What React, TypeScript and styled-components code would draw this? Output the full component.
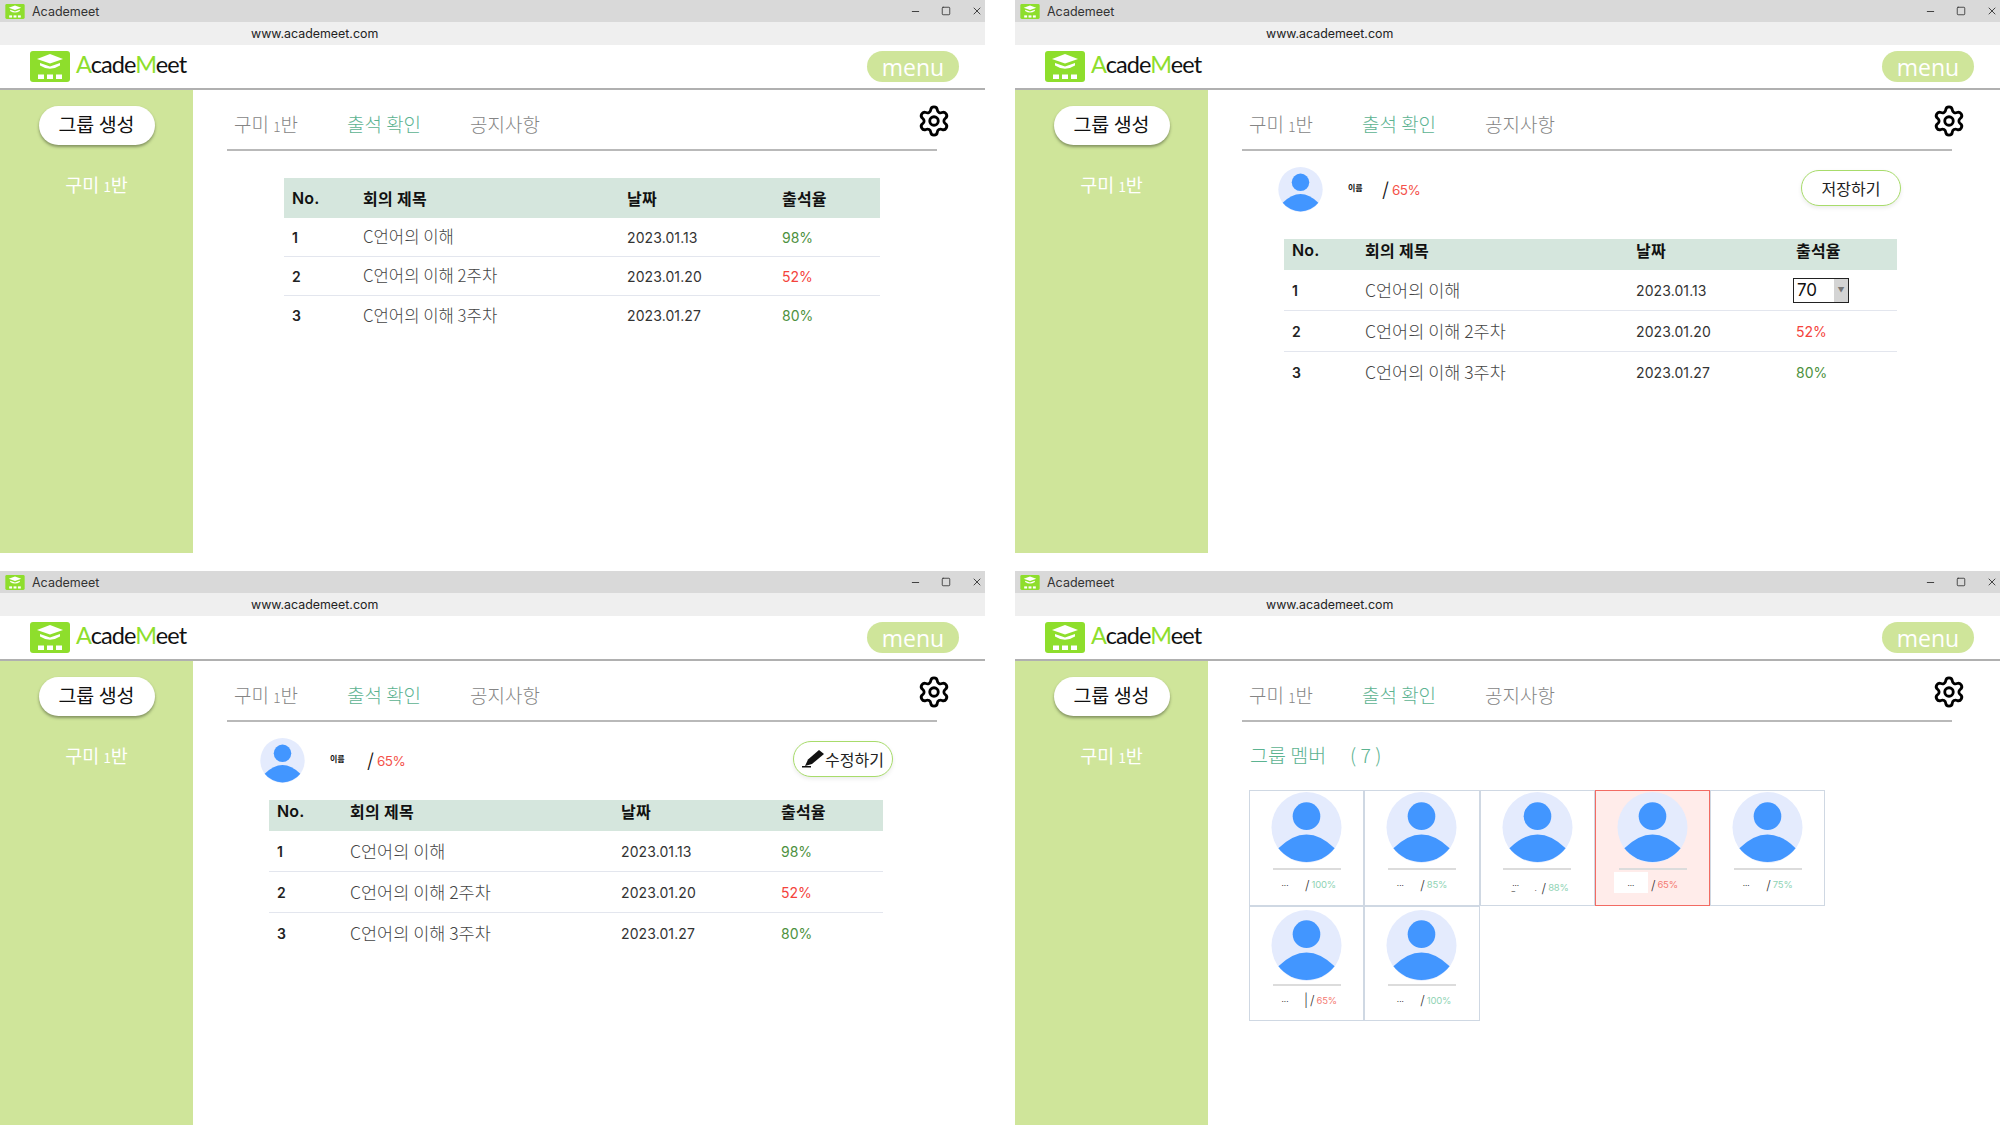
import React from 'react';
import styled, { createGlobalStyle } from 'styled-components';
import { Minus, Settings, Square, X } from 'lucide-react';

const GlobalStyle = createGlobalStyle`
  html, body {
    margin: 0;
    padding: 0;
    background: #fff;
  }
  * {
    box-sizing: border-box;
  }
  body {
    font-family: 'Inter', 'Noto Sans CJK KR', sans-serif;
  }
`;

const KOREAN = `'Noto Sans CJK KR', 'Inter', sans-serif`;
const MINT = '#5cb391';

const Page = styled.div`
  width: 2000px;
  height: 1125px;
  display: grid;
  grid-template-columns: 985px 985px;
  grid-template-rows: 553px 554px;
  column-gap: 30px;
  row-gap: 18px;
  overflow: hidden;
`;

const WindowFrame = styled.section`
  display: flex;
  flex-direction: column;
  min-width: 0;
  min-height: 0;
  background: #fff;
`;

const TitleBar = styled.div`
  height: 22px;
  flex: none;
  display: flex;
  align-items: center;
  padding: 0 2px 0 5px;
  background: #d9d9d9;
`;

const TitleText = styled.span`
  margin-left: 7px;
  font-size: 12.5px;
  color: #333;
`;

const WindowControls = styled.div`
  margin-left: auto;
  display: flex;
  align-items: center;
  gap: 20px;
  color: #333;
`;

const AddressBar = styled.div`
  height: 23px;
  flex: none;
  padding-left: 251px;
  display: flex;
  align-items: center;
  background: #efefef;
  font-size: 12.4px;
  color: #222;
`;

const Header = styled.header`
  height: 45px;
  flex: none;
  display: flex;
  align-items: center;
  padding: 0 26px 0 30px;
  border-bottom: 2px solid #b0b0b0;
`;

const Brand = styled.div`
  margin: -5px 0 0 6px;
  font-family: 'Lato', sans-serif;
  font-size: 23.5px;
  letter-spacing: -0.9px;
  color: #111;
`;

const BrandAccent = styled.span`
  color: #8ede2c;
`;

const MenuButton = styled.button`
  margin-left: auto;
  width: 92px;
  height: 31px;
  padding: 0;
  border: none;
  border-radius: 16px;
  background: #cfe59a;
  color: #fff;
  font-family: 'Open Sans', sans-serif;
  font-size: 23px;
  line-height: 28px;
`;

const Body = styled.div`
  flex: 1;
  display: flex;
  min-height: 0;
`;

const Sidebar = styled.aside`
  width: 193px;
  flex: none;
  display: flex;
  flex-direction: column;
  align-items: center;
  padding-top: 16px;
  background: #cfe59a;
`;

const CreateButton = styled.button`
  width: 116px;
  height: 39px;
  padding: 0 0 5px;
  border: none;
  border-radius: 20px;
  background: #fff;
  box-shadow: 0 2px 3px rgba(70, 80, 50, 0.55);
  color: #111;
  font-family: ${KOREAN};
  font-size: 19.5px;
`;

const SidebarItem = styled.div`
  margin-top: 26px;
  color: #fff;
  font-family: ${KOREAN};
  font-size: 18.5px;
`;

const SmallDigit = styled.span`
  font-size: 0.72em;
`;

const Main = styled.main`
  flex: 1;
  min-width: 0;
  padding: 0 48px 0 34px;
`;

const TabBar = styled.nav`
  height: 61px;
  display: flex;
  align-items: center;
  padding: 8px 0 0 7px;
  border-bottom: 2px solid #b9b9b9;
  font-family: ${KOREAN};
  font-size: 19px;
  font-weight: 300;
`;

const Tab = styled.span<{ $active?: boolean }>`
  margin-right: 49px;
  color: ${({ $active }) => ($active ? MINT : '#858585')};
`;

const GearSlot = styled.div`
  margin-left: auto;
  margin-right: -14px;
  margin-top: -6px;
  height: 34px;
  color: #000;
`;

const ProfileRow = styled.div<{ $left: number; $right: number }>`
  display: flex;
  align-items: center;
  height: 45px;
  margin: 16px ${({ $right }) => $right}px 0 ${({ $left }) => $left}px;
`;

const ProfileName = styled.span`
  margin-left: 25px;
  width: 16px;
  margin-top: -4px;
  font-family: ${KOREAN};
  font-size: 8px;
  font-weight: 700;
  color: #111;
`;

const ProfileSlash = styled.span<{ $gap: number }>`
  margin-left: ${({ $gap }) => $gap}px;
  font-size: 20px;
  font-weight: 300;
  color: #111;
`;

const ProfileRate = styled.span`
  margin-left: 3px;
  font-size: 13.5px;
  letter-spacing: -0.5px;
  color: #f4524a;
`;

const OutlineButton = styled.button`
  margin: -3px 0 0 auto;
  width: 100px;
  height: 36px;
  display: flex;
  align-items: center;
  justify-content: center;
  padding: 0;
  border: 1.5px solid #a8dc6b;
  border-radius: 18px;
  background: #fff;
  box-shadow: 0 2px 4px rgba(0, 0, 0, 0.08);
  color: #222;
  font-family: ${KOREAN};
  font-size: 16px;
`;

const Table = styled.div<{ $left: number; $width: number; $top: number }>`
  width: ${({ $width }) => $width}px;
  margin: ${({ $top }) => $top}px 0 0 ${({ $left }) => $left}px;
`;

const TableRow = styled.div<{ $head?: boolean; $columns: string; $height: number }>`
  display: grid;
  grid-template-columns: ${({ $columns }) => $columns};
  align-items: center;
  height: ${({ $height }) => $height}px;
  padding-left: 8px;
  font-size: 14px;
  background: ${({ $head }) => ($head ? '#d5e6dd' : 'transparent')};
  border-bottom: 1px solid ${({ $head }) => ($head ? '#d5e6dd' : '#e3e6ee')};

  &:last-child {
    border-bottom: none;
  }
`;

const HeadCell = styled.div<{ $raised?: boolean }>`
  font-size: 16px;
  font-weight: 600;
  letter-spacing: 0.2px;
  color: #111;
  margin-top: ${({ $raised }) => ($raised ? -9 : 0)}px;
`;

const NumberCell = styled.div`
  font-weight: 600;
  color: #222;
`;

const TitleCell = styled.div<{ $size: number }>`
  margin-top: -2px;
  font-family: ${KOREAN};
  font-size: ${({ $size }) => $size}px;
  font-weight: 300;
  color: #444;
`;

const DateCell = styled.div`
  letter-spacing: 0.1px;
  color: #333;
`;

const RateCell = styled.div<{ $tone: 'good' | 'bad' }>`
  color: ${({ $tone }) => ($tone === 'good' ? '#4d9140' : '#f4433c')};
`;

const RateSelect = styled.div`
  width: 56px;
  height: 25px;
  margin-left: -3px;
  display: flex;
  align-items: stretch;
  justify-content: space-between;
  border: 1px solid #222;
  font-size: 17px;
  color: #111;
`;

const RateValue = styled.span`
  padding-left: 3px;
  line-height: 22px;
`;

const RateArrow = styled.span`
  width: 14px;
  display: flex;
  align-items: center;
  justify-content: center;
  background: #d4d4d4;
  color: #777;
  font-size: 7px;
`;

const GroupHeading = styled.h2`
  margin: 18px 0 0 8px;
  display: flex;
  gap: 24px;
  font-family: ${KOREAN};
  font-size: 19.5px;
  line-height: 30px;
  font-weight: 300;
  color: ${MINT};
`;

const MemberGrid = styled.div`
  margin: 20px 0 0 7px;
  display: grid;
  grid-template-columns: repeat(5, 115.3px);
  grid-auto-rows: 115.5px;
`;

const MemberCard = styled.div<{ $alert?: boolean; $lowered?: boolean }>`
  position: relative;
  display: flex;
  flex-direction: column;
  align-items: center;
  padding-top: ${({ $lowered }) => ($lowered ? 3 : 1)}px;
  border: 1px solid ${({ $alert }) => ($alert ? '#f26b63' : '#cfd8e3')};
  background: ${({ $alert }) => ($alert ? '#ffecea' : '#fff')};
`;

const MemberRule = styled.div<{ $lowered?: boolean }>`
  width: 68px;
  height: 2px;
  margin-top: ${({ $lowered }) => ($lowered ? 3 : 5)}px;
  background: #dcdcdc;
`;

const MemberFooter = styled.div`
  align-self: stretch;
  display: flex;
  align-items: center;
  height: 21px;
  margin-top: 2px;
  padding-left: 18px;
`;

const MemberName = styled.span<{ $masked?: boolean }>`
  width: 34px;
  height: 21px;
  flex: none;
  text-align: center;
  font-size: 8px;
  line-height: 22px;
  color: #222;
  background: ${({ $masked }) => ($masked ? '#fff' : 'transparent')};
`;

const MemberSlash = styled.span<{ $offset: number; $drop?: boolean }>`
  margin: ${({ $drop }) => ($drop ? 10 : 4)}px 0 0 ${({ $offset }) => $offset}px;
  font-size: 13px;
  font-weight: 300;
  color: #333;
`;

const MemberRate = styled.span<{ $tone: 'good' | 'bad'; $drop?: boolean }>`
  margin: ${({ $drop }) => ($drop ? 10 : 4)}px 0 0 2px;
  font-size: 9.5px;
  letter-spacing: -0.2px;
  color: ${({ $tone }) => ($tone === 'good' ? '#8fd3b4' : '#f47a72')};
`;

// stray marks left over the third card's name in the picture
const StrayMark = styled.span<{ $left: number }>`
  position: absolute;
  left: ${({ $left }) => $left}px;
  top: 92px;
  font-size: 8px;
  color: #555;
`;

const LogoMark = ({ width, height }: { width: number; height: number }) => (
  <svg width={width} height={height} viewBox="0 0 40 31" style={{ flex: 'none' }}>
    <rect width="40" height="31" rx="3" fill="#8ede2c" />
    <polygon points="20,3 33,8 20,12.5 7,8" fill="#fff" />
    <path d="M10 12 L20 15.5 L30 12 L30 14.5 Q20 21 10 14.5 Z" fill="#fff" />
    <rect x="8" y="23.5" width="6" height="4.5" fill="#fff" />
    <rect x="17" y="23.5" width="6" height="4.5" fill="#fff" />
    <rect x="26" y="23.5" width="6" height="4.5" fill="#fff" />
  </svg>
);

const Avatar = ({ size }: { size: number }) => (
  <svg width={size} height={size} viewBox="0 0 71 72" style={{ flex: 'none' }}>
    <ellipse cx="35.5" cy="36" rx="35.5" ry="36" fill="#e4ebfd" />
    <ellipse cx="35.5" cy="24.5" rx="14" ry="14" fill="#4296ff" />
    <path d="M7 57 Q35.5 29 64 57 A36 36 0 0 1 7 57 Z" fill="#4296ff" />
  </svg>
);

const PencilIcon = () => (
  <svg width="23" height="18" viewBox="0 0 23 18" style={{ flex: 'none' }}>
    <path d="M17 0 L22 4 L10 14 L3 16 L6 9.5 Z" fill="#111" />
    <rect x="0" y="16" width="9" height="1.5" fill="#111" />
  </svg>
);

type Rate = { value: string; tone: 'good' | 'bad' };

const MEETINGS: { no: number; title: string; date: string; rate: Rate }[] = [
  { no: 1, title: 'C언어의 이해', date: '2023.01.13', rate: { value: '98%', tone: 'good' } },
  { no: 2, title: 'C언어의 이해 2주차', date: '2023.01.20', rate: { value: '52%', tone: 'bad' } },
  { no: 3, title: 'C언어의 이해 3주차', date: '2023.01.27', rate: { value: '80%', tone: 'good' } },
];

const MEMBERS: {
  rate: Rate;
  offset: number;
  alert?: boolean;
  drop?: boolean;
  bar?: boolean;
}[] = [
  { rate: { value: '100%', tone: 'good' }, offset: 3 },
  { rate: { value: '85%', tone: 'good' }, offset: 3 },
  { rate: { value: '88%', tone: 'good' }, offset: 9, drop: true },
  { rate: { value: '65%', tone: 'bad' }, offset: 3, alert: true },
  { rate: { value: '75%', tone: 'good' }, offset: 3 },
  { rate: { value: '65%', tone: 'bad' }, offset: 2, bar: true },
  { rate: { value: '100%', tone: 'good' }, offset: 3 },
];

type TableProps = {
  left: number;
  width: number;
  top: number;
  columns: string;
  headHeight: number;
  rowHeight: number;
  titleSize: number;
  raised?: boolean;
  editFirst?: boolean;
};

const AttendanceTable = ({
  left,
  width,
  top,
  columns,
  headHeight,
  rowHeight,
  titleSize,
  raised,
  editFirst,
}: TableProps) => (
  <Table $left={left} $width={width} $top={top}>
    <TableRow $head $columns={columns} $height={headHeight}>
      <HeadCell $raised={raised}>No.</HeadCell>
      <HeadCell $raised={raised}>회의 제목</HeadCell>
      <HeadCell $raised={raised}>날짜</HeadCell>
      <HeadCell $raised={raised}>출석율</HeadCell>
    </TableRow>
    {MEETINGS.map((meeting, index) => (
      <TableRow key={meeting.no} $columns={columns} $height={rowHeight}>
        <NumberCell>{meeting.no}</NumberCell>
        <TitleCell $size={titleSize}>{meeting.title}</TitleCell>
        <DateCell>{meeting.date}</DateCell>
        {editFirst && index === 0 ? (
          <RateSelect>
            <RateValue>70</RateValue>
            <RateArrow>▼</RateArrow>
          </RateSelect>
        ) : (
          <RateCell $tone={meeting.rate.tone}>{meeting.rate.value}</RateCell>
        )}
      </TableRow>
    ))}
  </Table>
);

type ProfileProps = { left: number; right: number; slashGap: number; children: React.ReactNode };

const Profile = ({ left, right, slashGap, children }: ProfileProps) => (
  <ProfileRow $left={left} $right={right}>
    <Avatar size={45} />
    <ProfileName>이름</ProfileName>
    <ProfileSlash $gap={slashGap}>/</ProfileSlash>
    <ProfileRate>65%</ProfileRate>
    {children}
  </ProfileRow>
);

const Members = () => (
  <>
    <GroupHeading>
      <span>그룹 멤버</span>
      <span>( 7 )</span>
    </GroupHeading>
    <MemberGrid>
      {MEMBERS.map((member, index) => {
        const lowered = index >= 5;
        return (
          <MemberCard key={index} $alert={member.alert} $lowered={lowered}>
            <Avatar size={71} />
            <MemberRule $lowered={lowered} />
            <MemberFooter>
              <MemberName $masked={member.alert}>...</MemberName>
              {member.bar && <MemberSlash $offset={2}>|</MemberSlash>}
              <MemberSlash $offset={member.offset} $drop={member.drop}>
                /
              </MemberSlash>
              <MemberRate $tone={member.rate.tone} $drop={member.drop}>
                {member.rate.value}
              </MemberRate>
            </MemberFooter>
            {member.drop && (
              <>
                <StrayMark $left={31}>_</StrayMark>
                <StrayMark $left={54}>.</StrayMark>
              </>
            )}
          </MemberCard>
        );
      })}
    </MemberGrid>
  </>
);

const AppWindow = ({ children }: { children: React.ReactNode }) => (
  <WindowFrame>
    <TitleBar>
      <LogoMark width={20} height={15} />
      <TitleText>Academeet</TitleText>
      <WindowControls>
        <Minus size={11} strokeWidth={2} />
        <Square size={10} strokeWidth={2} />
        <X size={12} strokeWidth={1.8} />
      </WindowControls>
    </TitleBar>
    <AddressBar>www.academeet.com</AddressBar>
    <Header>
      <LogoMark width={40} height={31} />
      <Brand>
        <BrandAccent>A</BrandAccent>cade<BrandAccent>M</BrandAccent>eet
      </Brand>
      <MenuButton>menu</MenuButton>
    </Header>
    <Body>
      <Sidebar>
        <CreateButton>그룹 생성</CreateButton>
        <SidebarItem>
          구미 <SmallDigit>1</SmallDigit>반
        </SidebarItem>
      </Sidebar>
      <Main>
        <TabBar>
          <Tab>
            구미 <SmallDigit>1</SmallDigit>반
          </Tab>
          <Tab $active>출석 확인</Tab>
          <Tab>공지사항</Tab>
          <GearSlot>
            <Settings size={34} strokeWidth={2} />
          </GearSlot>
        </TabBar>
        {children}
      </Main>
    </Body>
  </WindowFrame>
);

const App: React.FC = () => (
  <>
    <GlobalStyle />
    <Page>
      <AppWindow>
        <AttendanceTable
          left={57}
          width={596}
          top={27}
          columns="71px 264px 155px 1fr"
          headHeight={40}
          rowHeight={39}
          titleSize={16.7}
        />
      </AppWindow>
      <AppWindow>
        <Profile left={36} right={51} slashGap={18}>
          <OutlineButton>저장하기</OutlineButton>
        </Profile>
        <AttendanceTable
          left={42}
          width={613}
          top={27}
          columns="73px 271px 160px 1fr"
          headHeight={31}
          rowHeight={41}
          titleSize={17.5}
          raised
          editFirst
        />
      </AppWindow>
      <AppWindow>
        <Profile left={33} right={44} slashGap={21}>
          <OutlineButton>
            <PencilIcon />
            수정하기
          </OutlineButton>
        </Profile>
        <AttendanceTable
          left={42}
          width={614}
          top={17}
          columns="73px 271px 160px 1fr"
          headHeight={31}
          rowHeight={41}
          titleSize={17.5}
          raised
        />
      </AppWindow>
      <AppWindow>
        <Members />
      </AppWindow>
    </Page>
  </>
);

export default App;
